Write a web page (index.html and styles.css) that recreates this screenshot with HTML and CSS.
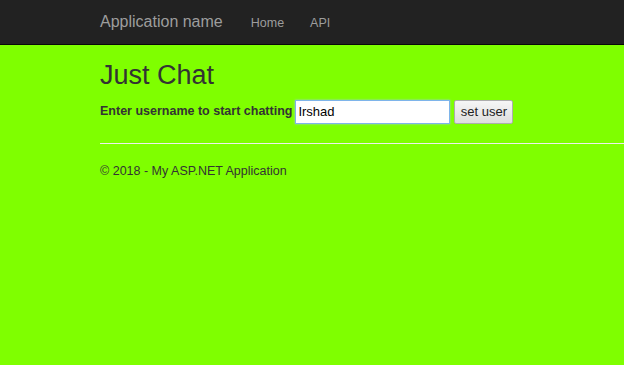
FILE: index.html
```html
<!DOCTYPE html>
<html>
<head>
    <title>Just Chat</title>
    <link rel="stylesheet" href="styles.css">
</head>
<body>
    <div class="navbar">
        <div class="container nav-inner">
            <a class="brand" href="#">Application name</a>
            <ul class="nav">
                <li><a href="#">Home</a></li>
                <li><a href="#">API</a></li>
            </ul>
        </div>
    </div>

    <div class="container body-content">
        <h2>Just Chat</h2>
        <div class="user-row">
            <label for="username">Enter username to start chatting</label>
            <input type="text" id="username" value="Irshad">
            <button type="button" class="btn">set user</button>
        </div>
        <hr>
        <footer>
            <p>&copy; 2018 - My ASP.NET Application</p>
        </footer>
    </div>
</body>
</html>
```

FILE: styles.css
```css
html, body {
    margin: 0;
    height: 100%;
}

body {
    font-family: "Liberation Sans", Arial, sans-serif;
    font-size: 12.5px;
    line-height: 1.42857;
    color: #333;
    background-color: #7fff00;
}

.container {
    padding-left: 100px;
}

.navbar {
    height: 44px;
    background-color: #222;
    border-bottom: 1px solid #080808;
}

.nav-inner {
    display: flex;
    align-items: baseline;
    height: 44px;
    padding-top: 11px;
    box-sizing: border-box;
}

.brand {
    font-size: 16px;
    color: #9d9d9d;
    text-decoration: none;
    margin-right: 15px;
}

.nav {
    display: flex;
    list-style: none;
    margin: 0;
    padding: 0;
}

.nav a {
    display: block;
    padding: 0 13px;
    color: #9d9d9d;
    text-decoration: none;
}

h2 {
    font-size: 27px;
    font-weight: 500;
    line-height: 1.1;
    margin: 16px 0 9px;
}

.user-row {
    display: flex;
    align-items: center;
}

.user-row label {
    font-weight: bold;
    margin-right: 3px;
}

.user-row input {
    box-sizing: border-box;
    width: 155px;
    height: 24px;
    padding: 1px 2px;
    border: 1px solid #7eb4ea;
    box-shadow: 0 0 2px #9ecaed;
    font-family: "Liberation Sans", Arial, sans-serif;
    font-size: 13px;
    color: #000;
    outline: none;
}

.btn {
    box-sizing: border-box;
    margin-left: 4px;
    width: 59px;
    height: 24px;
    padding: 0;
    font-family: "Liberation Sans", Arial, sans-serif;
    font-size: 13px;
    color: #222;
    background: linear-gradient(#f6f6f6, #dedede);
    border: 1px solid #adadad;
    border-radius: 2px;
}

hr {
    margin: 19px 0 0;
    border: 0;
    border-top: 1px solid #eee;
}

footer p {
    margin: 19px 0 0;
}
```
